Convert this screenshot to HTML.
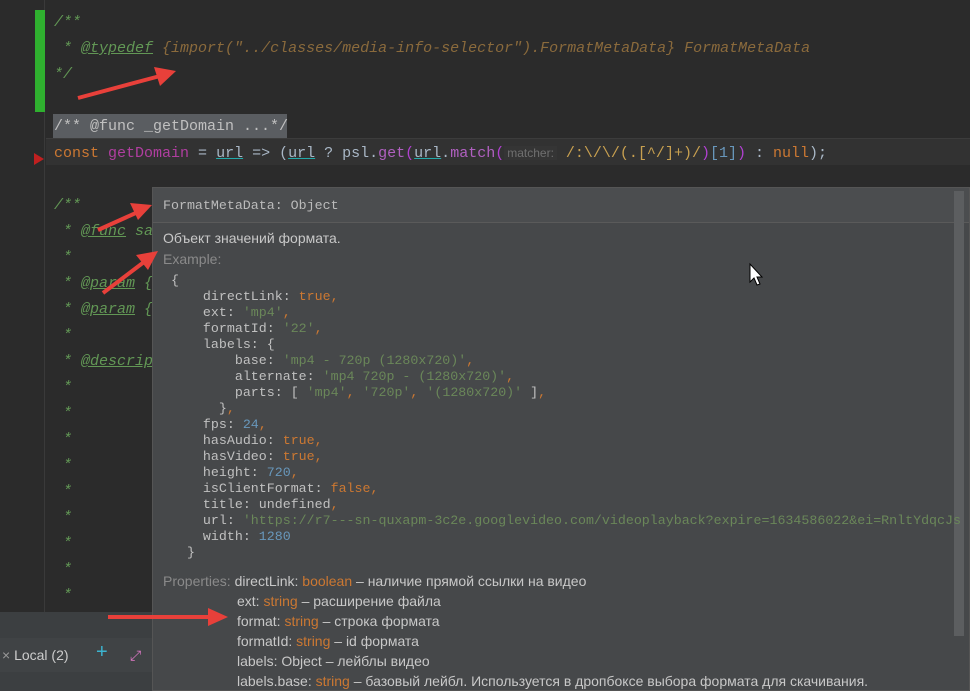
<!DOCTYPE html>
<html><head><meta charset="utf-8"><style>
*{margin:0;padding:0;box-sizing:border-box}
body{width:970px;height:691px;overflow:hidden;background:#2b2b2b;position:relative;font-family:"Liberation Mono","DejaVu Sans Mono",monospace}
.ab{position:absolute;white-space:pre}
.ed{font-size:15px;color:#a9b7c6;line-height:26px}
.c{color:#629755;font-style:italic}
.tag{text-decoration:underline;text-decoration-color:#629755}
.tip{position:absolute;left:152px;top:187px;width:818px;height:504px;background:#46484a;border:1px solid #555}
.tt{font-size:13.3px;color:#bbb}
.code{font-size:13.3px;line-height:16px;color:#c0c0c0}
.s{color:#6a8759}.k{color:#cc7832}.n{color:#6897bb}
.sans{font-family:"Liberation Sans","DejaVu Sans",sans-serif;font-size:14px;color:#c8c8c8;line-height:20px}
.ty{color:#cc7832}
</style></head><body>
<div class="ab" style="left:0;top:0;width:45px;height:612px;background:#2b2b2b;border-right:1px solid #3a3a3a"></div>
<div class="ab" style="left:35px;top:10px;width:10px;height:102px;background:#2fb02f"></div>
<div class="ab" style="left:46px;top:138px;width:924px;height:27px;background:#323232;border-top:1px solid #3c3c3c"></div>
<div class="ab" style="left:53px;top:114px;width:234px;height:24px;background:#5a5d61"></div>
<div class="ab" style="left:34px;top:153px;width:0;height:0;border-top:6px solid transparent;border-bottom:6px solid transparent;border-left:10px solid #c02020"></div>
<div class="ab ed" style="left:54px;top:10px"><span class="c">/**</span></div>
<div class="ab ed" style="left:54px;top:36px"><span class="c"> * <span class="tag">@typedef</span> <span style="color:#8a6a3c">{import("../classes/media-info-selector").FormatMetaData} FormatMetaData</span></span></div>
<div class="ab ed" style="left:54px;top:62px"><span class="c">*/</span></div>
<div class="ab ed" style="left:54px;top:114px;color:#c0c0c0">/** @func _getDomain ...*/</div>
<div class="ab ed" style="left:54px;top:140px"><span class="k">const</span> <span style="color:#b03ea0">getDomain</span> = <span style="text-decoration:underline;text-decoration-color:#2aa">url</span> =&gt; (<span style="text-decoration:underline;text-decoration-color:#2aa">url</span> ? psl.<span style="color:#b060c0">get</span><span style="color:#b040d0">(</span><span style="text-decoration:underline;text-decoration-color:#2aa">url</span>.<span style="color:#b060c0">match</span><span style="color:#b040d0">(</span><span style="font-family:'Liberation Sans',sans-serif;font-size:12px;color:#707070;background:#353535;padding:0 3px">matcher:</span> <span style="color:#c8a050">/:\/\/(.[^/]+)/</span><span style="color:#b040d0">)</span><span class="n">[1]</span><span style="color:#b040d0">)</span> : <span class="k">null</span>);</div>
<div class="ab ed" style="left:54px;top:193px"><span class="c">/**</span></div>
<div class="ab ed c" style="left:54px;top:219px"> * <span class="tag">@func</span> sa</div>
<div class="ab ed c" style="left:54px;top:245px"> *</div>
<div class="ab ed c" style="left:54px;top:271px"> * <span class="tag">@param</span> {</div>
<div class="ab ed c" style="left:54px;top:297px"> * <span class="tag">@param</span> {</div>
<div class="ab ed c" style="left:54px;top:323px"> *</div>
<div class="ab ed c" style="left:54px;top:349px"> * <span class="tag">@descrip</span></div>
<div class="ab ed c" style="left:54px;top:375px;line-height:26px"> *
 *
 *
 *
 *
 *
 *
 *
 *</div>
<div class="ab" style="left:0;top:612px;width:152px;height:79px;background:#3c3f41"></div>
<div class="ab" style="left:0;top:638px;width:152px;height:34px;background:#404345"></div>
<div class="ab sans" style="left:2px;top:645px;color:#999">× <span style="color:#ccc">Local (2)</span></div>
<div class="ab sans" style="left:96px;top:642px;color:#3cb4d0;font-size:20px">+</div>
<div class="ab sans" style="left:130px;top:645px;color:#e07ac8">⤢</div>
<div class="tip">
<div class="ab" style="left:0;top:0;width:816px;height:35px;background:#4b4d4f;border-bottom:1px solid #5a5a5a"></div>
<div class="ab tt" style="left:10px;top:10px">FormatMetaData: Object</div>
<div class="ab" style="left:801px;top:3px;width:10px;height:445px;background:#5c5e60"></div>
<div class="ab sans" style="left:10px;top:40px">Объект значений формата.</div>
<div class="ab sans" style="left:10px;top:61px;color:#8a8a8a">Example:</div>
<div class="ab code" style="left:18px;top:85px">{
    directLink: <span class="k">true,</span>
    ext: <span class="s">'mp4'</span><span class="k">,</span>
    formatId: <span class="s">'22'</span><span class="k">,</span>
    labels: {
        base: <span class="s">'mp4 - 720p (1280x720)'</span><span class="k">,</span>
        alternate: <span class="s">'mp4 720p - (1280x720)'</span><span class="k">,</span>
        parts: [ <span class="s">'mp4'</span><span class="k">,</span> <span class="s">'720p'</span><span class="k">,</span> <span class="s">'(1280x720)'</span> ]<span class="k">,</span>
      }<span class="k">,</span>
    fps: <span class="n">24</span><span class="k">,</span>
    hasAudio: <span class="k">true,</span>
    hasVideo: <span class="k">true,</span>
    height: <span class="n">720</span><span class="k">,</span>
    isClientFormat: <span class="k">false,</span>
    title: undefined<span class="k">,</span>
    url: <span class="s">'https://r7---sn-quxapm-3c2e.googlevideo.com/videoplayback?expire=1634586022&amp;ei=RnltYdqcJs</span>
    width: <span class="n">1280</span>
  }</div>
<div class="ab sans" style="left:10px;top:383px"><span style="color:#8a8a8a">Properties:</span> directLink: <span class="ty">boolean</span> – наличие прямой ссылки на видео</div>
<div class="ab sans" style="left:84px;top:403px">ext: <span class="ty">string</span> – расширение файла
format: <span class="ty">string</span> – строка формата
formatId: <span class="ty">string</span> – id формата
labels: Object – лейблы видео
labels.base: <span class="ty">string</span> – базовый лейбл. Используется в дропбоксе выбора формата для скачивания.</div>
</div>
<svg class="ab" style="left:0;top:0" width="970" height="691">
<g stroke="#e8403a" stroke-width="4" fill="#e8403a">
<line x1="78" y1="98" x2="160" y2="76"/><polygon points="176,71 154,67 160,86" stroke="none"/>
<line x1="98" y1="230" x2="138" y2="212"/><polygon points="152,205 130,203 138,220" stroke="none"/>
<line x1="103" y1="293" x2="144" y2="262"/><polygon points="158,251 136,255 148,270" stroke="none"/>
<line x1="108" y1="617" x2="210" y2="617"/><polygon points="228,617 208,608 208,626" stroke="none"/>
</g>
<path d="M750,264 L750,282 L754,278 L757,285 L760,284 L757,277 L762,277 Z" fill="#fff" stroke="#000" stroke-width="1"/>
</svg>
</body></html>
